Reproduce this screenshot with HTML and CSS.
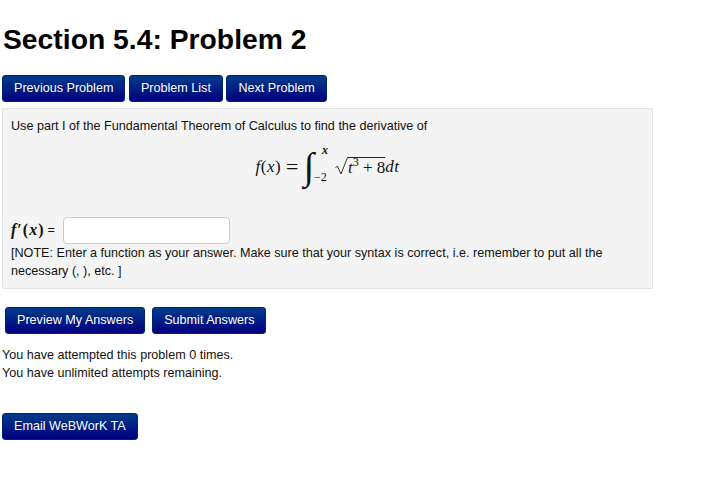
FILE: index.html
```html
<!DOCTYPE html>
<html lang="en">
<head>
<meta charset="utf-8">
<title>Section 5.4: Problem 2</title>
<link rel="stylesheet" href="styles.css">
</head>
<body>
<h1 class="title">Section 5.4: Problem 2</h1>
<nav class="nav-row">
  <a class="btn">Previous Problem</a>
  <a class="btn">Problem List</a>
  <a class="btn">Next Problem</a>
</nav>
<section class="problem">
  <p class="prompt">Use part I of the Fundamental Theorem of Calculus to find the derivative of</p>
  <div class="equation">
    <span class="math spaced"><i>f</i>(<i>x</i>)</span>
    <span class="math equals">=</span>
    <span class="integral">
      <span class="int-sign">∫</span>
      <span class="limits"><i class="upper">x</i><span class="lower">−2</span></span>
    </span>
    <svg class="radical" width="13" height="18" viewBox="0 0 13 18" aria-hidden="true"><path d="M0.5 10.5 L2.5 9.3 L6 17 L12.5 0.5 L13 0.5" fill="none" stroke="#222" stroke-width="0.9"/></svg>
    <span class="radicand math"><i>t</i><sup>3</sup> + 8</span>
    <span class="math spaced"><i>dt</i></span>
  </div>
  <div class="answer-row">
    <span class="math fprime"><i>f</i>′(<i>x</i>)</span>
    <span>=</span>
    <input class="answer" type="text">
  </div>
  <p class="note">[NOTE: Enter a function as your answer. Make sure that your syntax is correct, i.e. remember to put all the necessary (, ), etc. ]</p>
</section>
<div class="submit-row">
  <a class="btn">Preview My Answers</a>
  <a class="btn">Submit Answers</a>
</div>
<p class="attempts">You have attempted this problem 0 times.<br>You have unlimited attempts remaining.</p>
<a class="btn email">Email WeBWorK TA</a>
</body>
</html>
```
FILE: styles.css
```css
html, body { margin: 0; padding: 0; background: #fff; }
body {
  padding: 0 2px;
  font-family: "Liberation Sans", Arial, sans-serif;
  font-size: 12.6px;
  line-height: 18px;
  color: #111;
  width: 651px;
}
.title {
  margin: 0;
  padding: 21px 0 0 1px;
  height: 54px;
  font-size: 28.3px;
  line-height: 36px;
  font-weight: 700;
  color: #000;
}
.btn {
  display: inline-block;
  box-sizing: border-box;
  height: 27px;
  padding: 0 11px;
  font-size: 12.6px;
  line-height: 25px;
  color: #fff;
  background: linear-gradient(#003c8c, #00007f);
  border: 1px solid #00236b;
  border-radius: 3px;
  text-shadow: 0 -1px 0 rgba(0,0,0,.25);
  white-space: nowrap;
}
.nav-row { display: flex; gap: 3.5px; }
.problem {
  margin-top: 6px;
  box-sizing: border-box;
  height: 181px;
  padding: 8px 8px;
  background: #f4f4f4;
  border: 1px solid #e3e3e3;
  border-radius: 2px;
}
.prompt { margin: 0; }
.equation {
  display: flex;
  align-items: center;
  justify-content: center;
  height: 50px;
  margin-top: 7px;
}
.math { font-family: "Liberation Serif", "DejaVu Serif", serif; font-size: 17px; white-space: pre; color: #111; }
.spaced { letter-spacing: .5px; }
.equals { margin-left: 5px; font-size: 22px; }
.integral { display: inline-flex; align-items: center; margin-left: 5px; margin-bottom: 3px; }
.int-sign { font-family: "Liberation Serif", serif; font-size: 38px; line-height: 40px; }
.limits { display: flex; flex-direction: column; justify-content: space-between; height: 39px; margin-left: 0; margin-bottom: 4px; font-family: "Liberation Serif", serif; font-size: 12px; line-height: 12px; }
.upper { margin-left: 8px; font-weight: 700; }
.radical { margin-left: 7px; margin-bottom: 2px; }
.radicand { border-top: 1px solid #222; line-height: 19px; }
.radicand sup { font-size: 12px; line-height: 0; }
.answer-row { display: flex; align-items: center; gap: 3px; margin-top: 25px; height: 26px; }
.fprime { font-weight: 700; font-size: 16px; letter-spacing: 1px; }
.answer {
  box-sizing: border-box;
  width: 167px;
  height: 27px;
  margin: 0 0 0 5px;
  background: #fff;
  border: 1px solid #ccc;
  border-radius: 4px;
}
.note { margin: 1px 0 0; }
.submit-row { display: flex; gap: 7px; margin: 18px 0 0 3px; }
.attempts { margin: 12px 0 0; }
.email { margin-top: 31px; }
```
